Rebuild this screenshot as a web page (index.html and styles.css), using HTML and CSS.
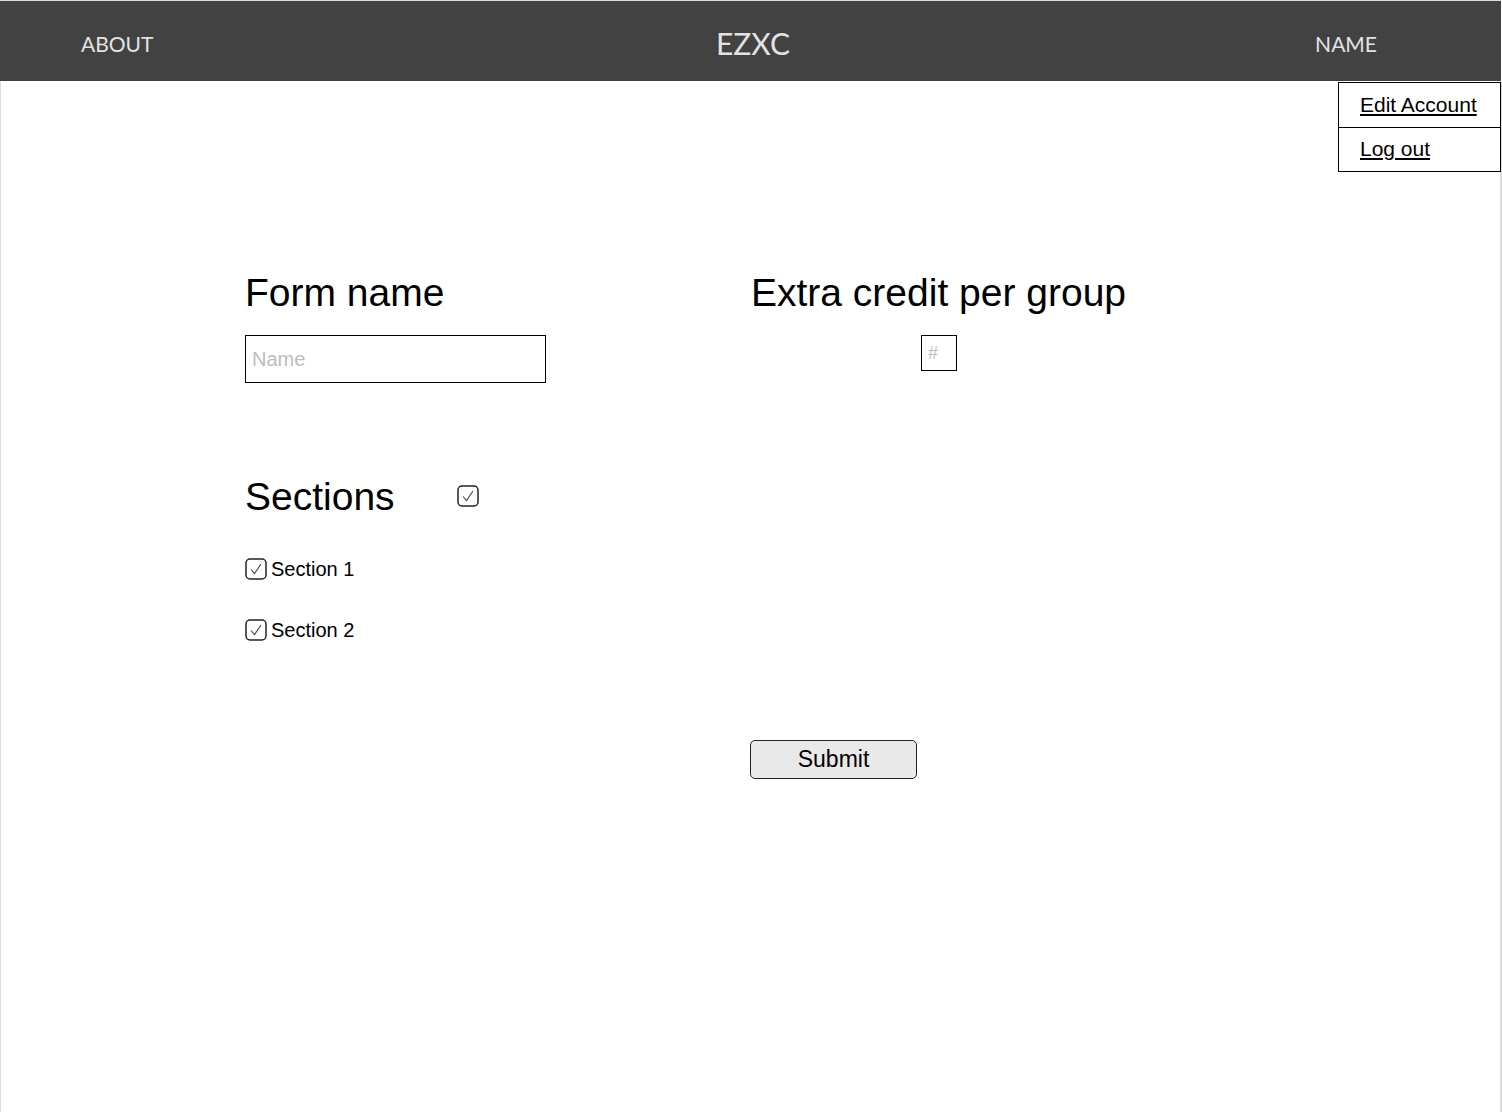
FILE: index.html
```html
<!DOCTYPE html>
<html>
<head>
<meta charset="utf-8">
<link rel="stylesheet" href="styles.css">
</head>
<body>
<div class="page">
  <header class="topbar">
    <a class="nav nav-left">ABOUT</a>
    <a class="brand">EZXC</a>
    <a class="nav nav-right">NAME</a>
  </header>
  <ul class="menu">
    <li><a href="#">Edit Account</a></li>
    <li><a href="#">Log out</a></li>
  </ul>
  <main class="content">
    <div class="col col-left">
      <h2 class="heading">Form name</h2>
      <input class="name-input" type="text" placeholder="Name">
      <div class="sections-head">
        <h2 class="heading">Sections</h2>
        <span class="check check-all"><svg viewBox="0 0 22 22" width="22" height="22"><rect x="1" y="1" width="20" height="20" rx="4" fill="#fff" stroke="#222" stroke-width="1.5"/><path d="M6 11.5 L9.5 15.5 L16 6" fill="none" stroke="#444" stroke-width="1.1"/></svg></span>
      </div>
      <label class="section-row"><span class="check"><svg viewBox="0 0 22 22" width="22" height="22"><rect x="1" y="1" width="20" height="20" rx="4" fill="#fff" stroke="#222" stroke-width="1.5"/><path d="M6 11.5 L9.5 15.5 L16 6" fill="none" stroke="#444" stroke-width="1.1"/></svg></span>Section 1</label>
      <label class="section-row"><span class="check"><svg viewBox="0 0 22 22" width="22" height="22"><rect x="1" y="1" width="20" height="20" rx="4" fill="#fff" stroke="#222" stroke-width="1.5"/><path d="M6 11.5 L9.5 15.5 L16 6" fill="none" stroke="#444" stroke-width="1.1"/></svg></span>Section 2</label>
    </div>
    <div class="col col-right">
      <h2 class="heading">Extra credit per group</h2>
      <input class="num-input" type="text" placeholder="#">
      <button class="submit" type="button">Submit</button>
    </div>
  </main>
</div>
</body>
</html>
```

FILE: styles.css
```css
* { box-sizing: border-box; }
html, body { margin: 0; padding: 0; background: #fff; }
body { font-family: "Liberation Sans", Arial, sans-serif; color: #000; }
.page {
  position: relative;
  width: 1502px;
  height: 1112px;
  border-top: 1px solid #dcdcdc;
  overflow: hidden;
}
.topbar {
  width: 1501px;
  height: 80px;
  background: #424242;
  display: grid;
  grid-template-columns: 1fr auto 1fr;
  align-items: center;
  padding: 4px 76px 0 81px;
  font-family: Lato, "Open Sans", sans-serif;
  color: #e2e2e2;
}
.nav { font-size: 21px; }
.nav-left { justify-self: start; }
.nav-right { justify-self: end; margin-right: 48px; }
.brand { font-size: 30px; }
.menu {
  position: absolute;
  top: 81px;
  right: 1px;
  width: 163px;
  margin: 0;
  padding: 0;
  list-style: none;
  border: 1px solid #000;
  background: #fff;
  z-index: 2;
}
.menu li {
  height: 44px;
  line-height: 44px;
  padding-left: 21px;
  font-size: 21px;
}
.menu li + li { border-top: 1px solid #000; line-height: 42px; }
.menu a { color: #000; text-decoration: underline; }
.content {
  display: flex;
  height: 1031px;
  padding-left: 244px;
  padding-top: 189px;
  border-left: 1px solid #dcdcdc;
  border-right: 2px solid #dcdcdc;
}
.col { display: flex; flex-direction: column; align-items: flex-start; }
.col-left { width: 506px; }
.heading {
  margin: 0;
  font-size: 39px;
  line-height: 45px;
  font-weight: normal;
}
.name-input {
  margin-top: 20px;
  width: 301px;
  height: 48px;
  border: 1.5px solid #000;
  padding: 0 6px;
  font-family: "Liberation Sans", Arial, sans-serif;
  font-size: 20px;
  outline: none;
}
.name-input::placeholder { color: #bdbdbd; }
.sections-head {
  margin-top: 91px;
  display: flex;
  align-items: center;
  gap: 62px;
}
.check { display: inline-flex; width: 22px; height: 22px; }
.check-all { margin-top: -1px; }
.section-row {
  display: flex;
  align-items: center;
  gap: 4px;
  font-size: 20px;
  height: 22px;
  margin-top: 39px;
}
.sections-head + .section-row { margin-top: 39px; }
.num-input {
  margin-top: 20px;
  margin-left: 170px;
  width: 36px;
  height: 36px;
  border: 1.5px solid #000;
  padding: 0 6px;
  font-family: "Liberation Sans", Arial, sans-serif;
  font-size: 18px;
  outline: none;
}
.num-input::placeholder { color: #bdbdbd; }
.submit {
  margin-top: 369px;
  margin-left: -1px;
  width: 167px;
  height: 39px;
  background: #e9e9e9;
  border: 1px solid #222;
  border-radius: 5px;
  font-family: "Liberation Sans", Arial, sans-serif;
  font-size: 23px;
  color: #000;
  padding: 0;
}
```
